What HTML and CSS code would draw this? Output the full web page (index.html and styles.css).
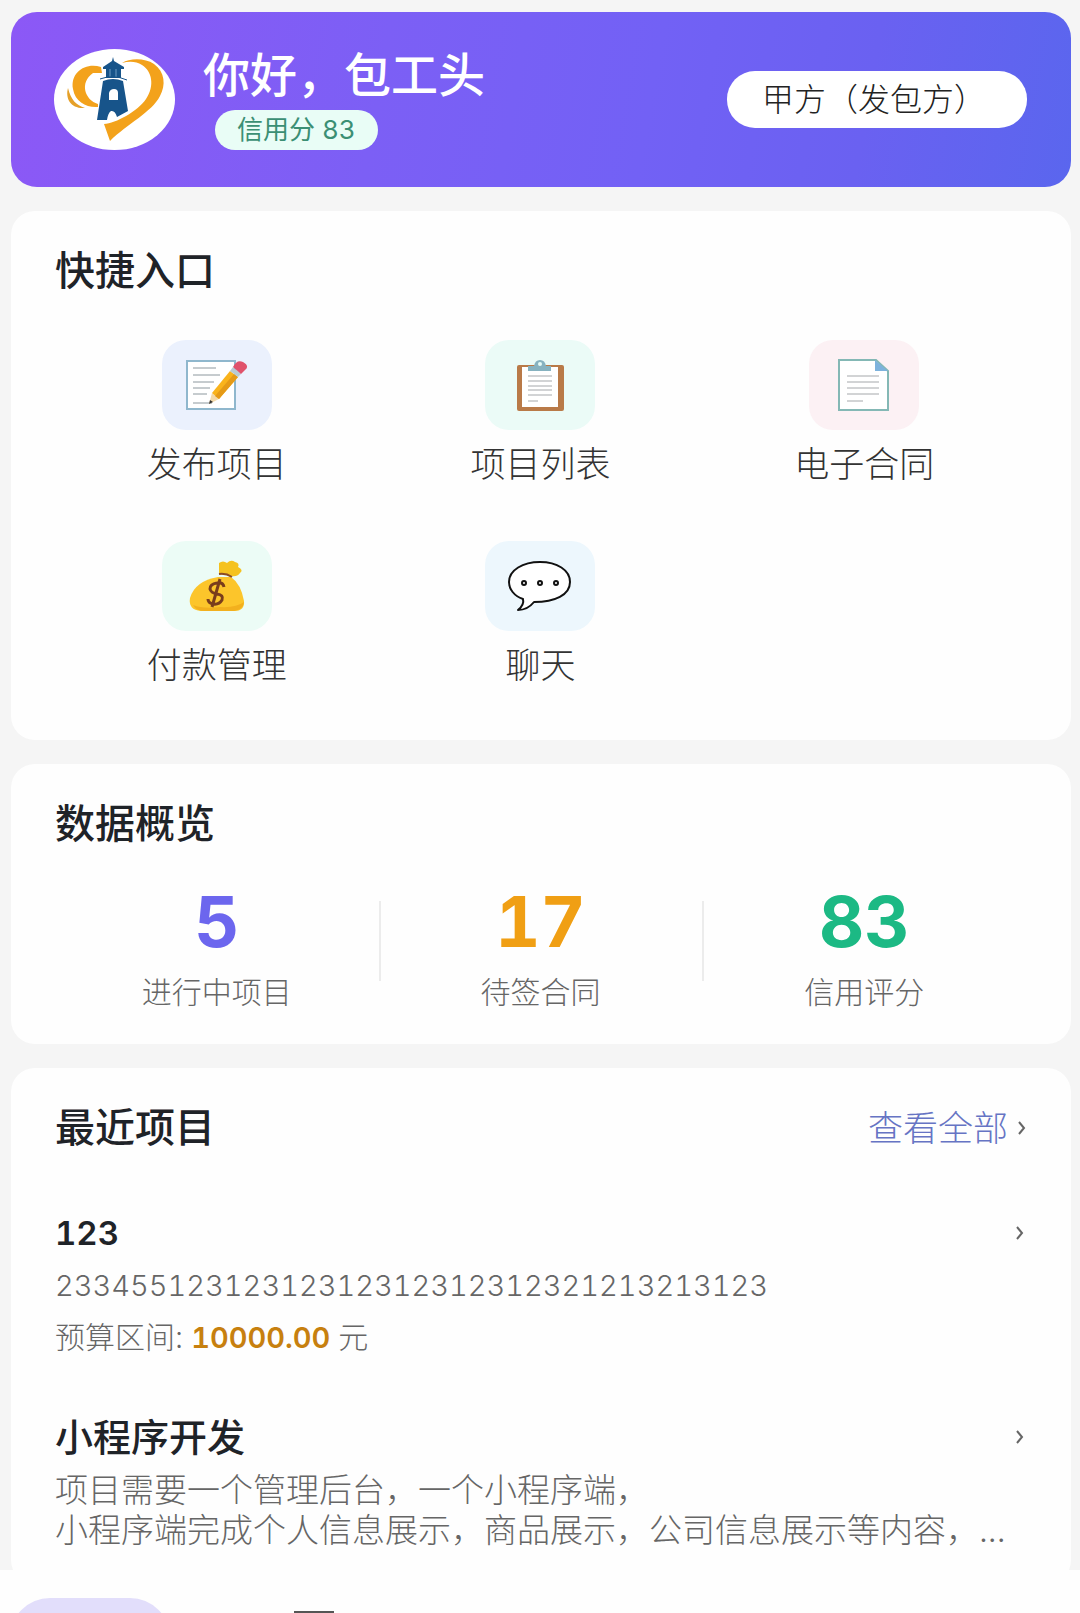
FILE: index.html
```html
<!DOCTYPE html>
<html lang="zh-CN">
<head>
    <meta charset="UTF-8">
    <meta name="viewport" content="width=device-width, initial-scale=1.0">
    <title>首页</title>
    <link rel="stylesheet" href="styles.css">
</head>
<body>
    <main class="content">
        <header class="user-header">
            <svg class="avatar" viewBox="0 0 121 101" aria-hidden="true">
                <ellipse cx="60.5" cy="50.5" rx="60.5" ry="50.5" fill="#fff"/>
                <path d="M47 18 C32 13 16 23 19 40 C21 53 33 59 44 58 L44 55 C31 51 25 34 39 24 L48 24 Z" fill="#f3a21b"/>
                <path d="M14 39 C11 50 17 60 31 59 C22 56 17 51 14 39 Z" fill="#e5a028"/>
                <path d="M68 14 C76 9 91 9 100 15 C111 23 112 36 106 47 C98 63 73 75 56 92 L50 75 C62 74 83 63 92 50 C101 37 98 22 88 16 C82 12 75 12 68 14 Z" fill="#f3a21b"/>
                <path d="M59 8 L60 12 L70 18 V20 H67 V29 H52 V20 H49 V18 L58 12 Z" fill="#17548a"/>
                <path d="M56 20 V28 M62 20 V28" stroke="#6f9cc4" stroke-width="1"/>
                <path d="M46 30 Q59 25 73 31" stroke="#17548a" stroke-width="1" fill="none"/>
                <path d="M49 32 Q59 28 69 32 L74 62 L63 68 Q61 61 57 62 Q54 64 53 71 L43 71 Z" fill="#17548a"/>
                <path d="M55 51 V44 Q56 40 60 40 Q64 40 64 44 V51 Z" fill="#fff"/>
            </svg>
            <div class="user-info">
                <h1 class="user-name">你好，包工头</h1>
                <span class="credit-badge">信用分 83</span>
            </div>
            <select class="role-select" aria-label="切换角色">
                <option selected>甲方（发包方）</option>
                <option>乙方（接包方）</option>
            </select>
        </header>

        <section class="card card-entry">
            <h2 class="card-title">快捷入口</h2>
            <nav class="entry-grid">
                <a class="entry" href="#publish">
                    <span class="entry-icon icon-blue">
                        <svg viewBox="0 0 64 54">
                            <rect x="2" y="3" width="48" height="48" fill="#fff" stroke="#8fb7cd" stroke-width="2"/>
                            <path d="M8 10 H31 M8 17 H35 M8 24 H29 M8 30 H25 M8 36 H22 M8 45 H27" stroke="#8d989e"/>
                            <path d="M24 46 L27 35 L34 41 Z" fill="#f3d9a9"/>
                            <path d="M24 46 L25 42 L28 44 Z" fill="#333"/>
                            <path d="M27 35 L45 13 L53 19 L34 41 Z" fill="#f9b31c"/>
                            <path d="M30 38 L49 16 L53 19 L34 41 Z" fill="#e59a17"/>
                            <path d="M45 13 L48 9 L56 16 L53 19 Z" fill="#b9cbd3"/>
                            <path d="M48 9 Q52 1 58 4 Q65 8 60 12 L56 16 Z" fill="#e0526b"/>
                        </svg>
                    </span>
                    <span class="entry-label">发布项目</span>
                </a>
                <a class="entry" href="#projects">
                    <span class="entry-icon icon-green">
                        <svg viewBox="0 0 64 54">
                            <rect x="9" y="7" width="47" height="46" rx="2" fill="#b97a48"/>
                            <rect x="14" y="9" width="36" height="40" fill="#fff"/>
                            <path d="M20 18 H44 M20 23 H44 M20 28 H44 M20 32 H44 M20 37 H44 M20 43 H30" stroke="#a5a8ab"/>
                            <path d="M20 13 V8 H26 Q27 2 32 2 Q37 2 38 8 H43 V13 Z" fill="#86b2c0"/>
                            <circle cx="32" cy="6" r="2" fill="#e6fbf6"/>
                        </svg>
                    </span>
                    <span class="entry-label">项目列表</span>
                </a>
                <a class="entry" href="#contracts">
                    <span class="entry-icon icon-pink">
                        <svg viewBox="0 0 64 54">
                            <path d="M7 2 H44 L56 13 V52 H7 Z" fill="#fff" stroke="#84b8b5" stroke-width="2"/>
                            <path d="M43 2 L56 13 H43 Z" fill="#7db2dc"/>
                            <path d="M15 18 H47 M15 24 H47 M15 30 H47 M15 36 H47 M15 43 H31" stroke="#a5a8ab"/>
                        </svg>
                    </span>
                    <span class="entry-label">电子合同</span>
                </a>
                <a class="entry" href="#payments">
                    <span class="entry-icon icon-mint">
                        <svg viewBox="0 0 64 54">
                            <path d="M34 15 V4 Q38 1 42 4 Q46 0 50 3 Q55 4 53 8 Q59 11 55 14 Q52 18 47 17 Z" fill="#f5c21f"/>
                            <path d="M33 18 Q10 22 5 39 Q3 51 16 52 H49 Q60 52 59 42 Q56 25 46 18 Z" fill="#fcc52b"/>
                            <path d="M8 46 Q11 52 20 52 H49 Q58 51 59 43 Q51 49 35 48 Q18 50 8 46 Z" fill="#f2b01e"/>
                            <path d="M34 15 Q41 14 47 18" fill="none" stroke="#8b4a23" stroke-width="2"/>
                            <path d="M39 28 Q38 23 32 24 Q25 25 25 30 Q26 34 32 35 Q39 36 37 41 Q34 46 28 45 Q23 44 23 40 M35 20 L27 48" fill="none" stroke="#7a3d1c" stroke-width="3"/>
                        </svg>
                    </span>
                    <span class="entry-label">付款管理</span>
                </a>
                <a class="entry" href="#chat">
                    <span class="entry-icon icon-sky">
                        <svg viewBox="0 0 64 54">
                            <path d="M32 3 C49 3 62 11 62 23 C62 36 47 43 26 43 C22 48 17 51 10 51 C15 47 16 44 15 40 C6 37 1 30 1 23 C1 11 15 3 32 3 Z" fill="#fff" stroke="#111" stroke-width="2" stroke-linejoin="round"/>
                            <g fill="#fff" stroke="#111" stroke-width="2">
                                <circle cx="16" cy="24" r="2"/>
                                <circle cx="32" cy="24" r="2"/>
                                <circle cx="48" cy="24" r="2"/>
                            </g>
                        </svg>
                    </span>
                    <span class="entry-label">聊天</span>
                </a>
            </nav>
        </section>

        <section class="card card-stats">
            <h2 class="card-title">数据概览</h2>
            <div class="stats">
                <div class="stat">
                    <div class="stat-value value-purple">5</div>
                    <div class="stat-label">进行中项目</div>
                </div>
                <div class="stat">
                    <div class="stat-value value-orange">17</div>
                    <div class="stat-label">待签合同</div>
                </div>
                <div class="stat">
                    <div class="stat-value value-green">83</div>
                    <div class="stat-label">信用评分</div>
                </div>
            </div>
        </section>

        <section class="card card-projects">
            <div class="card-head">
                <h2 class="card-title">最近项目</h2>
                <a class="more" href="#all">查看全部
                    <svg class="chevron" viewBox="0 0 8 16"><path d="M1 2 L6 8 L1 14"/></svg>
                </a>
            </div>
            <article class="project">
                <div class="project-head">
                    <h3 class="project-title title-number">123</h3>
                    <svg class="chevron" viewBox="0 0 8 16"><path d="M1 2 L6 8 L1 14"/></svg>
                </div>
                <p class="project-number">23345512312312312312312312321213213123</p>
                <p class="budget">预算区间: <strong>10000.00</strong> 元</p>
            </article>
            <article class="project">
                <div class="project-head">
                    <h3 class="project-title">小程序开发</h3>
                    <svg class="chevron" viewBox="0 0 8 16"><path d="M1 2 L6 8 L1 14"/></svg>
                </div>
                <p class="project-desc">项目需要一个管理后台，一个小程序端，<br>小程序端完成个人信息展示，商品展示，公司信息展示等内容，...</p>
            </article>
        </section>
    </main>

    <nav class="tabbar" aria-label="底部导航">
        <a class="tab active" href="#home" aria-label="首页"></a>
        <a class="tab" href="#projects" aria-label="项目"><span class="tab-icon"></span></a>
    </nav>
</body>
</html>
```
FILE: styles.css
```css
* {
    box-sizing: border-box;
    margin: 0;
    padding: 0;
}
body {
    display: flex;
    flex-direction: column;
    height: 100vh;
    overflow: hidden;
    background-color: #f5f5f5;
    color: #1f2328;
    font-family: Inter, "Noto Sans CJK SC", sans-serif;
    font-variant-numeric: tabular-nums;
}
a {
    color: inherit;
    text-decoration: none;
}
.content {
    flex: 1;
    min-height: 0;
    overflow: hidden;
    display: flex;
    flex-direction: column;
    gap: 24px;
    padding: 12px 9px 0 11px;
}

/* Шапка */
.user-header {
    flex-shrink: 0;
    display: flex;
    align-items: center;
    gap: 28px;
    padding: 37px 44px 37px 43px;
    border-radius: 26px;
    background: linear-gradient(100deg, #8c58f6 0%, #7c5ff5 35%, #7261f5 60%, #6a61f1 80%, #5a66ee 100%);
}
.avatar {
    width: 121px;
    height: 101px;
}
.user-info {
    display: flex;
    flex-direction: column;
    align-items: flex-start;
    gap: 9px;
}
.user-name {
    font-size: 47px;
    line-height: 52px;
    font-weight: 500;
    color: #fff;
}
.credit-badge {
    margin-left: 12px;
    padding: 0 22px;
    border-radius: 20px;
    background-color: #e9fdf6;
    color: #3b8f74;
    font-size: 26px;
    line-height: 40px;
}
.role-select {
    appearance: none;
    width: 300px;
    height: 57px;
    margin-left: auto;
    padding: 0 35px;
    border: none;
    border-radius: 28px;
    background-color: #fff;
    color: #222;
    font-family: inherit;
    font-size: 32px;
    font-weight: 300;
}

/* Карточки */
.card {
    flex-shrink: 0;
    padding: 34px 45px 34px 44px;
    border-radius: 24px;
    background-color: #fefefe;
}
.card-title {
    font-size: 40px;
    line-height: 52px;
    font-weight: 500;
}

/* Быстрый доступ */
.card-entry {
    padding-bottom: 51px;
}
.entry-grid {
    display: grid;
    grid-template-columns: repeat(3, 1fr);
    row-gap: 53px;
    margin-top: 43px;
}
.entry {
    display: flex;
    flex-direction: column;
    align-items: center;
    gap: 10px;
}
.entry-icon {
    display: flex;
    align-items: center;
    justify-content: center;
    width: 110px;
    height: 90px;
    border-radius: 24px;
}
.entry-icon svg {
    width: 64px;
    height: 54px;
}
.icon-blue {
    background-color: #ebf1fd;
}
.icon-green {
    background-color: #ebfbf7;
}
.icon-pink {
    background-color: #fcf1f4;
}
.icon-mint {
    background-color: #ecfcf6;
}
.icon-sky {
    background-color: #edf7fd;
}
.entry-label {
    font-size: 35px;
    line-height: 48px;
    font-weight: 300;
    color: #333;
}

/* Статистика */
.card-stats {
    padding-bottom: 32px;
}
.stats {
    display: grid;
    grid-template-columns: repeat(3, 1fr);
    margin-top: 37px;
}
.stat {
    position: relative;
    text-align: center;
}
.stat + .stat::before {
    content: "";
    position: absolute;
    left: 0;
    top: 14px;
    width: 2px;
    height: 80px;
    background-color: #ececec;
}
.stat-value {
    font-size: 70px;
    line-height: 70px;
    font-weight: 700;
}
.value-purple {
    color: #6c66ee;
}
.value-orange {
    color: #f09f14;
}
.value-green {
    color: #1cb984;
}
.stat-label {
    margin-top: 15px;
    font-size: 30px;
    line-height: 40px;
    font-weight: 300;
    color: #666;
}

/* Последние проекты */
.card-head,
.project-head {
    display: flex;
    align-items: center;
    justify-content: space-between;
}
.more {
    display: flex;
    align-items: center;
    gap: 10px;
    color: #6674c4;
    font-size: 35px;
    line-height: 52px;
    font-weight: 300;
}
.chevron {
    width: 8px;
    height: 16px;
    fill: none;
    stroke: #666;
    stroke-width: 2;
}
.project {
    margin-top: 54px;
}
.project-head .chevron {
    margin-right: 2px;
}
.project-title {
    font-size: 38px;
    line-height: 50px;
    font-weight: 500;
}
.title-number {
    font-size: 33px;
    font-weight: 600;
}
.project-number,
.project-desc {
    margin-top: 8px;
    font-size: 33px;
    line-height: 40px;
    font-weight: 300;
    color: #666;
}
.project-number {
    font-size: 29px;
}
.budget {
    margin-top: 11px;
    font-size: 30px;
    line-height: 40px;
    font-weight: 300;
    color: #666;
}
.budget strong {
    font-size: 29px;
    font-weight: 600;
    color: #c7800f;
}

/* Нижняя панель */
.tabbar {
    display: flex;
    gap: 64px;
    height: 43px;
    padding: 28px 10px 0;
    overflow: hidden;
    background-color: #fefefe;
}
.tab {
    width: 160px;
    height: 80px;
    flex-shrink: 0;
}
.tab.active {
    border-radius: 40px;
    background-color: #e2defb;
}
.tab-icon {
    display: block;
    width: 40px;
    height: 40px;
    margin: 13px auto 0;
    border-top: 3px solid #555;
}
```
